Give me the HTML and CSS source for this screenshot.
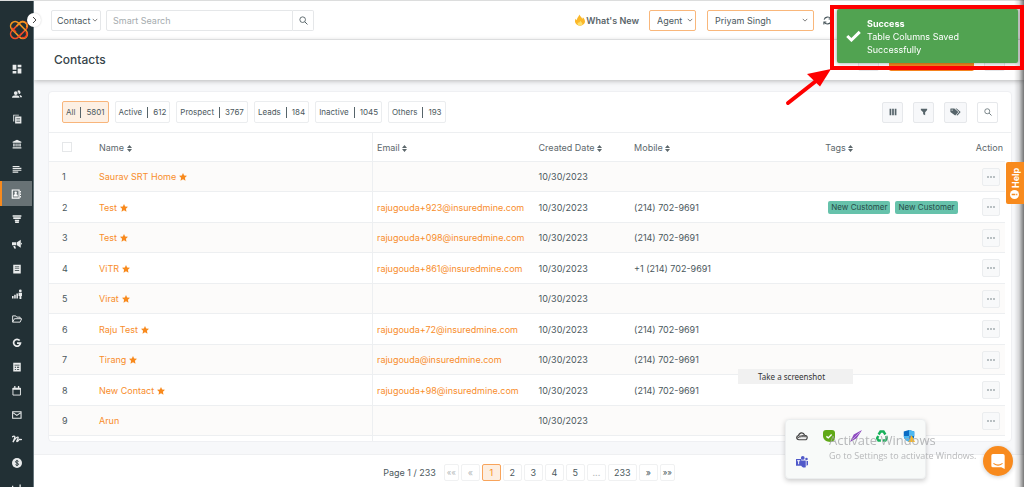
FILE: index.html
```html
<!DOCTYPE html>
<html lang="en">
<head>
<meta charset="utf-8">
<title>Contacts</title>
<link rel="stylesheet" href="styles.css">
</head>
<body>
<svg class="defs" aria-hidden="true">
  <symbol id="star" viewBox="0 0 24 24"><path fill="currentColor" d="M12 0l3.500 7.500 8.500 1-6.200 5.700 1.700 8.800-7.500-4.200L4.500 23l1.700-8.800L0 8.500l8.500-1z"/></symbol>
  <symbol id="sort" viewBox="0 0 10 14"><path fill="currentColor" d="M5 0l5 6H0zM5 14L0 8h10z"/></symbol>
  <symbol id="dots" viewBox="0 0 16 4"><circle cx="2" cy="2" r="1.600" fill="currentColor"/><circle cx="8" cy="2" r="1.600" fill="currentColor"/><circle cx="14" cy="2" r="1.600" fill="currentColor"/></symbol>
  <symbol id="search" viewBox="0 0 16 16"><circle cx="6.500" cy="6.500" r="5" fill="none" stroke="currentColor" stroke-width="1.500"/><path d="M10.300 10.300L15 15" stroke="currentColor" stroke-width="1.700"/></symbol>
</svg>
<div class="app">
  <nav class="sidebar" aria-label="Main">
    <a class="logo" href="#" aria-label="Home">
      <svg viewBox="0 0 20 20" fill="none" stroke-width="1.600">
        <rect x="0" y="5.500" width="20" height="9" rx="4.500" stroke="#f0502a" transform="rotate(-45 10 10)"/>
        <rect x="0" y="5.500" width="20" height="9" rx="4.500" stroke="#f3951f" transform="rotate(45 10 10)"/>
        <path stroke="#f3951f" d="M7.500 6.200l3.500-3.500c3-2.500 8.500.5 6.500 4.800"/>
        <path stroke="#ee4026" d="M12.500 13.800l-3.500 3.500M3 8l4 4M12.800 17.600c3.700 1 6.300-2.800 4.300-5.600"/>
      </svg>
    </a>
    <ul class="menu">
      <li><a href="#" aria-label="Dashboard"><svg viewBox="0 0 16 16"><path d="M1 1h6v8H1zM9 1h6v4H9zM9 7h6v8H9zM1 11h6v4H1z"/></svg></a></li>
      <li><a href="#" aria-label="People"><svg viewBox="0 0 16 16"><circle cx="6" cy="6.500" r="3"/><path d="M0 14c0-3 3-4 6-4s6 1 6 4zM8.500 3a3 3 0 1 1 2.500 5.200C10.500 6 10 4.500 8.500 3zM12 9.600c2.500.4 4 1.600 4 3.400h-3c0-1.500-.4-2.500-1-3.400z"/></svg></a></li>
      <li><a href="#" aria-label="Policies"><svg viewBox="0 0 16 16"><path d="M2 1h9v1.500H3.500V12H2z"/><path fill-rule="evenodd" d="M5 4h10v11H5zM7 7v1h6V7zM7 9v1h6V9zM7 11v1h6v-1z"/></svg></a></li>
      <li><a href="#" aria-label="Carriers"><svg viewBox="0 0 16 16"><path d="M8 1l7 3.500V6H1V4.500zM2 7h2.200v5H2zM5.600 7h1.800v5H5.600zM8.700 7h1.800v5H8.700zM11.800 7H14v5h-2.200zM1 13h14v2H1z"/></svg></a></li>
      <li><a href="#" aria-label="Tasks"><svg viewBox="0 0 16 16"><path d="M1 3h11v1.800H1zM1 6h14v1.800H1zM1 9h14v1.800H1zM1 12h9v1.800H1z"/></svg></a></li>
      <li><a class="active" href="#" aria-label="Contacts" aria-current="page"><svg viewBox="0 0 16 16"><path fill="none" stroke="currentColor" stroke-width="1.800" d="M2 1.500h11v13H2z"/><circle cx="7.500" cy="5.800" r="2"/><path d="M4 12c0-3 1.500-4 3.500-4s3.500 1 3.500 4zM14.500 3H16v2.500h-1.500zM14.500 7H16v2.500h-1.500zM14.500 11H16v2.500h-1.500z"/></svg></a></li>
      <li><a href="#" aria-label="Pipeline"><svg viewBox="0 0 16 16"><path d="M1 2h14v2.500H1zM2 5h12v3H2zM4.500 9h7v2.500h-7zM5 12h6v2.500H5z"/></svg></a></li>
      <li><a href="#" aria-label="Campaigns"><svg viewBox="0 0 16 16"><path d="M0 5h7v5H0zM8 5l6-4v13l-6-4zM2 11h3l1.500 4H3.500zM14.500 6c2 .4 2 2.600 0 3z"/></svg></a></li>
      <li><a href="#" aria-label="Documents"><svg viewBox="0 0 16 16"><path fill-rule="evenodd" d="M2 1h12v14H2zM4.500 4v1h7V4zM4.500 7v1h7V7zM4.500 10v1h7v-1z"/></svg></a></li>
      <li><a href="#" aria-label="Reports"><svg viewBox="0 0 16 16"><path d="M0 11h2.500v4H0zM3.500 9H6v6H3.500zM7 7h2.500v8H7zM10.500 6H16v5h-1v5h-3v-5h-1.500z"/><circle cx="13.300" cy="3" r="2.200"/></svg></a></li>
      <li><a href="#" aria-label="Files"><svg viewBox="0 0 16 16"><path fill="none" stroke="currentColor" stroke-width="1.500" d="M1 13V3h5l1.500 2H13v2.500M1 13l3-5.500h11.500L13 13z"/></svg></a></li>
      <li><a href="#" aria-label="Google"><svg viewBox="0 0 16 16"><path fill="none" stroke="currentColor" stroke-width="2.800" d="M12.300 4A5.500 5.500 0 1 0 13.500 8.300H8"/></svg></a></li>
      <li><a href="#" aria-label="Calculator"><svg viewBox="0 0 16 16"><path fill-rule="evenodd" d="M2 1h12v14H2zM4 5.500h8v-1H4zM4.500 7.500v1.500h2V7.500zM8 7.500v1.500h3.500V7.500zM4.500 11v1.500h2V11zM8 11v1.500h3.500V11z"/></svg></a></li>
      <li><a href="#" aria-label="Calendar"><svg viewBox="0 0 16 16"><path fill="none" stroke="currentColor" stroke-width="1.500" d="M1.500 3.500h12v11h-12z"/><path d="M1 3h13v3H1zM3.500 0h2v4h-2zM9.500 0h2v4h-2z"/></svg></a></li>
      <li><a href="#" aria-label="Mail"><svg viewBox="0 0 16 16"><path fill="none" stroke="currentColor" stroke-width="1.700" d="M1 2.800h13.500v10.500H1zM2 4.500l5.800 4.200 5.700-4.200"/></svg></a></li>
      <li><a href="#" aria-label="Signatures"><svg viewBox="0 0 16 16"><path fill="none" stroke="currentColor" stroke-width="2" d="M0 5c2-2 5-2.500 4.500 0S2 12 1.500 13c2-4 6-9 8-8S6 12 8 12s3-3 4-3.500 1 1 4 .2"/></svg></a></li>
      <li><a href="#" aria-label="Billing"><svg viewBox="0 0 16 16"><circle cx="8" cy="8" r="8"/><path fill="none" stroke="#223035" stroke-width="1.400" d="M10.500 5.500C9.500 4 5.500 4 5.500 6.200s5 1.400 5 3.700-4 2.400-5 .6M8 3v10"/></svg></a></li>
      <li><a href="#" aria-label="Analytics"><svg viewBox="0 0 16 16"><path d="M0 6h2v9H0zM4 10h2v5H4zM8 8h2v7H8zM12 4h2v11h-2z"/></svg></a></li>
    </ul>
    <button class="toggle" aria-label="Expand menu"><svg viewBox="0 0 8 8"><path d="M3 1l3 3-3 3" fill="none" stroke="#444" stroke-width="1"/></svg></button>
  </nav>

  <div class="page">
    <header class="topbar">
      <form class="search">
        <select class="select" aria-label="Search type"><option>Contact</option></select>
        <div class="searchbox">
          <input type="text" placeholder="Smart Search" aria-label="Smart Search">
          <button type="button" aria-label="Search"><svg><use href="#search"/></svg></button>
        </div>
      </form>
      <div class="account">
        <a class="news" href="#"><svg viewBox="0 0 16 18"><path fill="#fbb829" d="M7 0c1 3 4 4 4.500 7 .8-.6 1-1.500 1-2.500C15 7 16 9 16 11.500 16 15 12.500 18 8.500 18S1 15.500 0 12c0-2 0-3 1-5 .5 1 1 1.500 2 2C3 5 6 4 7 0z"/><path fill="#fddf6d" d="M8.500 10c.5 2 3.500 3 3.500 5S10 18 8.200 18 4 17 4 15c0-1 .5-2 1-2.500.5.700 1 1 1.500 1C6.500 12.500 8 12 8.500 10z"/></svg>What's New</a>
        <select class="select outlined role" aria-label="Role"><option>Agent</option></select>
        <select class="select outlined user" aria-label="User"><option>Priyam Singh</option></select>
        <button class="refresh" aria-label="Refresh"><svg viewBox="0 0 16 16" fill="none" stroke="currentColor" stroke-width="1.800"><path d="M2 6.500C3.500 1 11 .5 14 5M14 9.500C12.500 15 5 15.500 2 11M14.500 1v4.500H10M1.500 15v-4.500H6"/></svg></button>
      </div>
    </header>

    <div class="titlebar">
      <h1>Contacts</h1>
      <div class="title-actions">
        <button class="tile" aria-label="Import"></button>
        <button class="primary" aria-label="Add contact"></button>
        <button class="tile" aria-label="More"></button>
      </div>
    </div>

    <main class="content">
      <section class="card">
        <div class="toolbar">
          <div class="filters">
            <button class="filter current"><span>All</span><i></i><span>5801</span></button>
            <button class="filter"><span>Active</span><i></i><span>612</span></button>
            <button class="filter"><span>Prospect</span><i></i><span>3767</span></button>
            <button class="filter"><span>Leads</span><i></i><span>184</span></button>
            <button class="filter"><span>Inactive</span><i></i><span>1045</span></button>
            <button class="filter"><span>Others</span><i></i><span>193</span></button>
          </div>
          <div class="tools">
            <button class="tile" aria-label="Columns"><svg viewBox="0 0 14 14"><path fill="currentColor" d="M1 1.500h3v11H1zM5.500 1.500h3v11h-3zM10 1.500h3v11h-3z"/></svg></button>
            <button class="tile" aria-label="Filter"><svg viewBox="0 0 14 14"><path fill="currentColor" d="M1.500 1.500h11v2L9 7.500v5L5.500 11V7.500l-4-4z"/></svg></button>
            <button class="tile wide" aria-label="Tags"><svg viewBox="0 0 18 14"><path fill="currentColor" fill-rule="evenodd" d="M0 1.500L1 1h6l7 6-5.500 6L0 7zM3 2.800a1 1 0 1 0 .1 0z"/><path fill="currentColor" d="M9 1h2L18 7l-5.500 6-2-.8L15.500 7z"/></svg></button>
            <button class="tile plain" aria-label="Search contacts"><svg><use href="#search"/></svg></button>
          </div>
        </div>

        <div class="table-wrap">
        <table>
          <colgroup><col class="c-num"><col class="c-name"><col class="c-email"><col class="c-date"><col class="c-mobile"><col class="c-tags"><col class="c-action"></colgroup>
          <thead>
            <tr>
              <th><input type="checkbox" aria-label="Select all"></th>
              <th>Name <svg class="sort"><use href="#sort"/></svg></th>
              <th>Email <svg class="sort"><use href="#sort"/></svg></th>
              <th>Created Date <svg class="sort"><use href="#sort"/></svg></th>
              <th>Mobile <svg class="sort"><use href="#sort"/></svg></th>
              <th>Tags <svg class="sort"><use href="#sort"/></svg></th>
              <th>Action</th>
            </tr>
          </thead>
          <tbody>
            <tr><td>1</td><td><a href="#">Saurav SRT Home</a><svg class="star"><use href="#star"/></svg></td><td></td><td>10/30/2023</td><td></td><td></td><td><button class="more" aria-label="Actions"><svg><use href="#dots"/></svg></button></td></tr>
            <tr><td>2</td><td><a href="#">Test</a><svg class="star"><use href="#star"/></svg></td><td><a href="#">rajugouda+923@insuredmine.com</a></td><td>10/30/2023</td><td>(214) 702-9691</td><td><div class="tags"><span>New Customer</span><span>New Customer</span></div></td><td><button class="more" aria-label="Actions"><svg><use href="#dots"/></svg></button></td></tr>
            <tr><td>3</td><td><a href="#">Test</a><svg class="star"><use href="#star"/></svg></td><td><a href="#">rajugouda+098@insuredmine.com</a></td><td>10/30/2023</td><td>(214) 702-9691</td><td></td><td><button class="more" aria-label="Actions"><svg><use href="#dots"/></svg></button></td></tr>
            <tr><td>4</td><td><a href="#">ViTR</a><svg class="star"><use href="#star"/></svg></td><td><a href="#">rajugouda+861@insuredmine.com</a></td><td>10/30/2023</td><td>+1 (214) 702-9691</td><td></td><td><button class="more" aria-label="Actions"><svg><use href="#dots"/></svg></button></td></tr>
            <tr><td>5</td><td><a href="#">Virat</a><svg class="star"><use href="#star"/></svg></td><td></td><td>10/30/2023</td><td></td><td></td><td><button class="more" aria-label="Actions"><svg><use href="#dots"/></svg></button></td></tr>
            <tr><td>6</td><td><a href="#">Raju Test</a><svg class="star"><use href="#star"/></svg></td><td><a href="#">rajugouda+72@insuredmine.com</a></td><td>10/30/2023</td><td>(214) 702-9691</td><td></td><td><button class="more" aria-label="Actions"><svg><use href="#dots"/></svg></button></td></tr>
            <tr><td>7</td><td><a href="#">Tirang</a><svg class="star"><use href="#star"/></svg></td><td><a href="#">rajugouda@insuredmine.com</a></td><td>10/30/2023</td><td>(214) 702-9691</td><td></td><td><button class="more" aria-label="Actions"><svg><use href="#dots"/></svg></button></td></tr>
            <tr><td>8</td><td><a href="#">New Contact</a><svg class="star"><use href="#star"/></svg></td><td><a href="#">rajugouda+98@insuredmine.com</a></td><td>10/30/2023</td><td>(214) 702-9691</td><td></td><td><button class="more" aria-label="Actions"><svg><use href="#dots"/></svg></button></td></tr>
            <tr><td>9</td><td><a href="#">Arun</a></td><td></td><td>10/30/2023</td><td></td><td></td><td><button class="more" aria-label="Actions"><svg><use href="#dots"/></svg></button></td></tr>
            <tr class="tail"><td></td><td></td><td></td><td></td><td></td><td></td><td></td></tr>
          </tbody>
        </table>
        </div>
      </section>
    </main>

    <footer class="pager">
      <span class="count">Page 1 / 233</span>
      <button class="narrow off">««</button>
      <button class="off">«</button>
      <button class="current">1</button>
      <button>2</button>
      <button>3</button>
      <button>4</button>
      <button>5</button>
      <button class="off">...</button>
      <button class="last">233</button>
      <button>»</button>
      <button class="narrow">»»</button>
    </footer>
  </div>
</div>

<div class="edge"></div>
<button class="help"><svg viewBox="0 0 16 16"><circle cx="8" cy="8" r="8" fill="#fff"/><path fill="#f88a1d" d="M3 6.800h2v2.400H3zM6.500 6.800H13v2.400H6.500z"/></svg>Help</button>

<div class="toast" role="status">
  <svg viewBox="0 0 18 14"><path fill="none" stroke="#fff" stroke-width="3.600" d="M1.500 7l5 4.800L16.500 2"/></svg>
  <div><strong>Success</strong><p>Table Columns Saved Successfully</p></div>
</div>
<div class="callout"></div>
<svg class="arrow" viewBox="0 0 50 40"><path d="M6 35L34 13" stroke="#fe0000" stroke-width="4" stroke-linecap="round"/><path fill="#fe0000" d="M49 1L38 18.500 25 6z"/></svg>

<div class="hint">Take a screenshot</div>
<div class="tray">
  <svg viewBox="0 0 16 16"><path fill="#eee" stroke="#444" stroke-width="1.600" d="M4 13c-4 0-4-5-.6-5.500C4.500 3 10 2.500 11.500 7 16 7 16 13 12 13z"/><path fill="none" stroke="#555" stroke-width="1.300" d="M4 8.500c3-1 5-1 7.500-1.500M1.500 11c4-3 8-2 12-2"/></svg>
  <svg viewBox="0 0 16 16"><path fill="#60a917" d="M4 0h8a4 4 0 0 1 4 4v6a6 6 0 0 1-6 6C4 16 0 12 0 8V4a4 4 0 0 1 4-4z"/><path fill="none" stroke="#fff" stroke-width="1.800" d="M4.500 8.500l2.500 2 4.500-4.500"/></svg>
  <svg viewBox="0 0 16 16"><path fill="#8d4cc0" d="M16 0L5 6 0 16l9-5z"/><path stroke="#e6d3f5" stroke-width=".8" d="M4 12L13 3"/></svg>
  <svg viewBox="0 0 16 16" fill="none" stroke="#17b15a" stroke-width="3.200"><path d="M3.500 6L6 2h4l2.500 4M13.500 8l1 3-2 3H9M6.500 14H3.300l-1.800-3L3 8"/></svg>
  <svg viewBox="0 0 16 16"><path fill="#0a6cc4" d="M8 0l7 2v6c0 4-3 6-7 8-4-2-7-4-7-8V2z"/><path fill="#4bb8f2" d="M8 0l7 2v6H8zM1 8h7v8C4 14 1.500 12 1 8z"/><path fill="#ffb91d" d="M11.500 7L16 16H7z"/></svg>
  <svg viewBox="0 0 16 16"><circle cx="9" cy="2.500" r="2.500" fill="#5059c9"/><circle cx="14" cy="4" r="1.700" fill="#5059c9"/><path fill="#5059c9" d="M7 6h6v9c-3 1-5 0-6-2zM14 6.500h2V12l-2 1zM0 4h7v9H0z"/><path fill="none" stroke="#fff" stroke-width="1.300" d="M1.500 6.300h4M3.500 6v5"/></svg>
</div>
<div class="watermark"><b>Activate Windows</b><span>Go to Settings to activate Windows.</span></div>
<button class="chat" aria-label="Open chat"><svg viewBox="0 0 16 18"><path fill="#fff" d="M2 0h12a2 2 0 0 1 2 2v16l-4-2H2a2 2 0 0 1-2-2V2a2 2 0 0 1 2-2z"/><path fill="none" stroke="#f88a1d" stroke-width="1.300" stroke-linecap="round" d="M3 11.500c3 2.300 7 2.300 10 0"/></svg></button>
</body>
</html>
```
FILE: styles.css
```css
* { box-sizing: border-box; }
body { margin: 0; font-family: Inter, "Noto Sans", sans-serif; font-size: 9px; line-height: 13px; color: #4b585d; background: #fff; }
a { color: #f88d2b; text-decoration: none; }
button, input, select { font: inherit; color: inherit; margin: 0; padding: 0; }
button { display: flex; align-items: center; justify-content: center; background: #fff; border: 1px solid #ebedef; border-radius: 2px; }
.defs { position: absolute; width: 0; height: 0; }

.app { display: flex; height: 100vh; overflow: hidden; border-top: 1px solid #dcdddd; }
.sidebar { position: relative; z-index: 1; flex: 0 0 34px; background: #223035; border-right: 1px solid #66757b; }
.logo { display: flex; justify-content: center; padding: 19px 0 0 4px; height: 55px; }
.logo svg { width: 20px; height: 20px; }
.menu { list-style: none; margin: 0; padding: 0; }
.menu li { height: 25px; }
.menu li:nth-child(n+12) { height: 24px; }
.menu a { display: flex; align-items: center; justify-content: center; height: 100%; color: #e9ebec; }
.menu svg { width: 10px; height: 10px; fill: currentColor; }
.menu .active { background: #687275; border-left: 2px solid #f88a1d; margin-right: 1px; padding-right: 2px; color: #fff; }
.toggle { position: absolute; top: 12px; right: -8px; width: 14px; height: 14px; border: 0; border-radius: 50%; box-shadow: 0 0 2px #0003; }
.toggle svg { width: 8px; height: 8px; }

.page { flex: 1; min-width: 0; display: flex; flex-direction: column; }
.topbar { flex: none; display: flex; justify-content: space-between; align-items: center; height: 39px; padding: 0 192px 0 17px; border-bottom: 1px solid #eeeff0; }
.search, .account, .searchbox, .filters, .tools, .title-actions { display: flex; align-items: center; }
.search { gap: 5px; }
.select { height: 21px; width: 50px; padding: 0 5px; border: 1px solid #e5e7e9; border-radius: 2px; appearance: none; background: #fff url("data:image/svg+xml,%3Csvg xmlns='http://www.w3.org/2000/svg' viewBox='0 0 8 8'%3E%3Cpath d='M1 2.500l3 3 3-3' fill='none' stroke='%23555'/%3E%3C/svg%3E") no-repeat right 2px center / 6px 6px; }
.select.outlined { border-color: #f9b77b; padding: 0 7px; }
.role { width: 47px; margin-right: 11px; }
.user { width: 107px; margin-right: 9px; background-position: right 5px center; }
.searchbox input { width: 187px; height: 21px; padding: 0 6px; border: 1px solid #e5e7e9; border-radius: 2px 0 0 2px; }
.searchbox input::placeholder { color: #a5abae; }
.searchbox button { width: 21px; height: 21px; border-color: #e5e7e9; border-left: 0; border-radius: 0 2px 2px 0; }
.searchbox svg { width: 9px; height: 9px; }
.news { display: flex; align-items: center; gap: 1px; margin-right: 10px; color: #5a6569; font-weight: 600; }
.news svg { width: 10px; height: 12px; }
.refresh { border: 0; }
.refresh svg { width: 9px; height: 9px; }

.titlebar { position: relative; flex: none; display: flex; justify-content: space-between; align-items: center; height: 40px; padding: 0 19px 0 20px; background: #fff; box-shadow: 0 1px 5px #0004; }
h1 { margin: 0; font-size: 12px; line-height: 18px; font-weight: 500; color: #36444a; }
.title-actions { gap: 10px; }
.tile { width: 21px; height: 21px; background: #f7f8fa; border-color: #e6e8eb; color: #56646a; }
.tile svg { width: 8px; height: 8px; }
.tile.wide { width: 23px; }
.tile.wide svg { width: 11px; }
.tile.plain { background: #fff; }
.primary { width: 85px; height: 21px; background: #f5841f; border: 0; }

.content { flex: none; padding: 11px 12px 12px 14px; background: #f7f8fa; border-bottom: 1px solid #eff0f2; }
.card { background: #fff; border: 1px solid #eff0f3; border-radius: 4px; }
.toolbar { display: flex; justify-content: space-between; align-items: center; height: 41px; padding: 0 13px; border-bottom: 1px solid #edeff1; }
.filters { gap: 6px; font-size: 8px; }
.filter { height: 22px; padding: 0 3px; gap: 5px; }
.filter i { width: 1px; height: 11px; background: #56646a; }
.filter.current { background: #fdf0e4; border-color: #f8b57b; }
.tools { gap: 10px; }

.table-wrap { padding-right: 6px; }
table { width: 100%; table-layout: fixed; border-collapse: separate; border-spacing: 0; }
.c-num { width: 46px; } .c-name { width: 277px; } .c-email { width: 17%; } .c-date { width: 10%; } .c-mobile { width: 20%; } .c-tags { width: 15%; }
th, td { padding: 0 4px; height: 30px; text-align: left; font-weight: 400; white-space: nowrap; border-bottom: 1px solid #edeff1; }
th { height: 29px; color: #5d686c; }
th:first-child, td:first-child { padding-left: 13px; }
th:nth-child(3), td:nth-child(3) { border-left: 1px solid #edeff1; }
th:last-child { padding: 0 2px 0 0; text-align: right; }
tbody tr:nth-child(odd) { background: #fcfbfa; }
tbody tr:nth-child(even) td { height: 31px; }
tbody tr.tail:last-child td { height: 5px; border-bottom: 0; }
th input { display: block; appearance: none; width: 10px; height: 10px; border: 1px solid #e5e7e9; }
.sort { width: 5px; height: 7px; vertical-align: -1px; }
.star { width: 8px; height: 8px; margin-left: 3px; vertical-align: -1px; color: #f88a1d; }
td:last-child { padding: 0 5px 0 0; }
.more { width: 18px; height: 18px; margin-left: auto; background: #f8f9fa; color: #69777d; }
.more svg { width: 8px; height: 2px; }
.tags { display: flex; gap: 5px; padding-left: 3px; }
.tags span { padding: 0 3px; border-radius: 2px; background: #66c2ab; color: #264c48; font-size: 8px; line-height: 13px; }

.pager { display: flex; justify-content: center; align-items: center; gap: 2px; padding-top: 9px; }
.pager button { width: 19px; height: 17px; border-color: #f0f1f2; }
.pager .count { margin-right: 6px; }
.pager .narrow { width: 15px; font-size: 8px; }
.pager .last { width: 29px; }
.pager .off { color: #b5babc; }
.pager .current { background: #fdeee0; border-color: #f8a45b; color: #f88a1d; }

.edge { position: fixed; top: 0; right: 0; bottom: 0; width: 10px; background: linear-gradient(to right, #0000, #0002 50%, #0008); }
.help { position: fixed; top: 162px; right: 0; width: 18px; height: 42px; gap: 2px; border: 0; border-radius: 0 2px 2px 0; background: #f88a1d; color: #fff; font-weight: 700; writing-mode: vertical-rl; transform: rotate(180deg); }
.help svg { width: 9px; height: 9px; }
.toast { position: fixed; top: 9px; right: 6px; width: 181px; height: 54px; display: flex; align-items: center; gap: 6px; padding: 0 40px 0 9px; border-radius: 2px; background: #51a351; color: #fff; box-shadow: 0 0 4px #0006; }
.toast svg { flex: none; width: 15px; height: 12px; }
.toast strong { display: block; }
.toast p { margin: 0; }
.callout { position: fixed; top: 5px; right: 0; width: 194px; height: 65px; border: 4px solid #fe0000; }
.arrow { position: fixed; top: 68px; right: 192px; width: 50px; height: 40px; }
.hint { position: fixed; top: 369px; right: 171px; width: 115px; height: 15px; padding-left: 20px; background: #f1f1f1; font: 8px/15px "Noto Sans", sans-serif; color: #333; }
.tray { position: fixed; top: 419px; right: 98px; width: 141px; height: 60px; padding: 10px; display: grid; grid-template-columns: repeat(5, 12px); justify-content: space-between; align-content: space-between; border: 1px solid #eceeef; border-radius: 4px; background: #f8faf9; box-shadow: 0 2px 5px #0003; }
.tray svg { width: 12px; height: 12px; }
.watermark { position: fixed; top: 431px; right: 0; width: 195px; font-family: "Open Sans", sans-serif; color: #a6a8aacc; pointer-events: none; }
.watermark b { display: block; font-weight: 400; font-size: 13px; line-height: 18px; }
.watermark span { font-size: 9px; line-height: 14px; }
.chat { position: fixed; right: 11px; bottom: 11px; width: 30px; height: 30px; border: 0; border-radius: 50%; background: #f88a1d; box-shadow: 0 1px 4px #0003; }
.chat svg { width: 14px; height: 15px; }
```
